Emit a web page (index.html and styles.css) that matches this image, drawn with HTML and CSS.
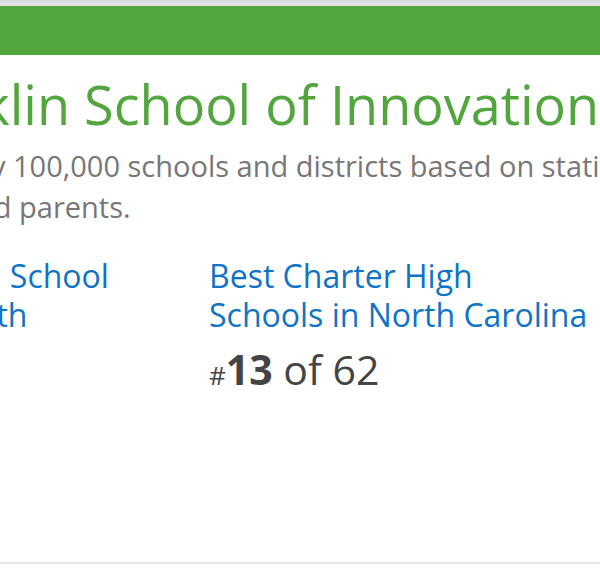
FILE: index.html
```html
<!DOCTYPE html>
<html lang="en">
<head>
    <meta charset="UTF-8">
    <meta name="viewport" content="width=device-width, initial-scale=1.0">
    <title>The Franklin School of Innovation - Rankings</title>
    <link rel="stylesheet" href="styles.css">
</head>
<body>

    <div class="top-shadow"></div>

    <section class="card">
        <div class="card-head"></div>

        <div class="card-body">
            <h1 class="school-name">The Franklin School of Innovation</h1>
            <p class="blurb">Niche rates nearly 100,000 schools and districts based on statistics and millions of reviews from students and parents.</p>

            <div class="rankings">
                <div class="ranking">
                    <a href="#" class="ranking-title">Best Public High School Teachers in North Carolina</a>
                    <div class="ranking-pos"><span class="hash">#</span><strong>48</strong> of 448</div>
                </div>
                <div class="ranking">
                    <a href="#" class="ranking-title">Best Charter High Schools in North Carolina</a>
                    <div class="ranking-pos"><span class="hash">#</span><strong>13</strong> of 62</div>
                </div>
                <div class="ranking">
                    <a href="#" class="ranking-title">Best Charter High Schools in Asheville Area</a>
                    <div class="ranking-pos"><span class="hash">#</span><strong>2</strong> of 5</div>
                </div>
            </div>
        </div>
    </section>

</body>
</html>
```

FILE: styles.css
```css
body {
    margin: 0;
    font-family: "Open Sans", Lato, sans-serif;
    background-color: #ffffff;
    overflow: hidden;
}
.top-shadow {
    height: 6px;
    background: linear-gradient(#d9d9d9, #e6e6e6);
}
.card {
    background: white;
    border-bottom: 2px solid #e6e6e6;
    height: 556px;
}
.card-head {
    height: 49px;
    background-color: #53a63e;
}
.card-body {
    margin-left: -239px;
    width: 1270px;
}
.school-name {
    margin: 18px 0 0;
    font-size: 54px;
    font-weight: 400;
    line-height: 62px;
    color: #53a63e;
    white-space: nowrap;
}
.blurb {
    margin: 10px 0 0;
    font-size: 29px;
    line-height: 41px;
    color: #777777;
}
.rankings {
    display: grid;
    grid-template-columns: repeat(3, 380px);
    column-gap: 68px;
    margin-top: 29px;
}
.ranking-title {
    display: block;
    font-size: 32px;
    line-height: 39px;
    color: #1074c6;
    text-decoration: none;
}
.ranking-pos {
    margin-top: 11px;
    font-size: 41px;
    line-height: 48px;
    color: #444444;
}
.ranking-pos .hash {
    font-size: 26px;
}
.ranking-pos strong {
    font-weight: 700;
}
```
